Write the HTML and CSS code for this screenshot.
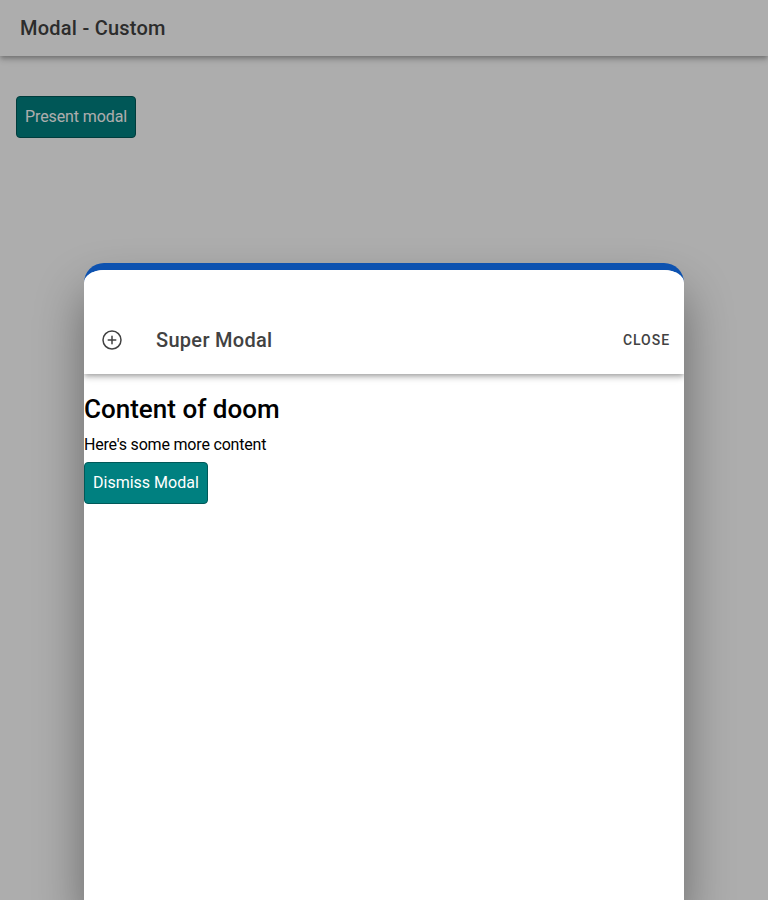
FILE: index.html
```html
<!DOCTYPE html>
<html lang="en">
<head>
<meta charset="utf-8">
<title>Modal - Custom</title>
<link rel="stylesheet" href="styles.css">
</head>
<body>
<header class="toolbar page-toolbar"><h1 class="title">Modal - Custom</h1></header>
<main class="page-content"><button class="btn btn-present">Present modal</button></main>
<div class="backdrop"></div>
<section class="modal" role="dialog">
  <header class="toolbar modal-toolbar">
    <svg class="icon" viewBox="0 0 512 512" fill="none" stroke="currentColor" stroke-width="32">
      <path d="M448 256c0-106-86-192-192-192S64 150 64 256s86 192 192 192 192-86 192-192z" stroke-miterlimit="10"/>
      <path d="M256 176v160M336 256H176" stroke-linecap="round" stroke-linejoin="round"/>
    </svg>
    <h2 class="title">Super Modal</h2>
    <button class="close">Close</button>
  </header>
  <div class="modal-content">
    <h1 class="heading">Content of doom</h1>
    <div class="text">Here's some more content</div>
    <button class="btn">Dismiss Modal</button>
  </div>
</section>
</body>
</html>
```
FILE: styles.css
```css
* { box-sizing: border-box; }
body {
  margin: 0;
  height: 900px;
  overflow: hidden;
  background: #fff;
  color: #000;
  font-family: Roboto, sans-serif;
  font-size: 16px;
}
.toolbar {
  display: flex;
  align-items: center;
  height: 56px;
  color: #424242;
  background: #fff;
  box-shadow: 0 2px 4px -1px rgba(0,0,0,.2), 0 4px 5px 0 rgba(0,0,0,.14), 0 1px 10px 0 rgba(0,0,0,.12);
}
.page-toolbar { padding: 0 20px; }
.title {
  margin: 0;
  font-size: 20px;
  font-weight: 500;
  letter-spacing: .24px;
}
.modal-toolbar .title { letter-spacing: .3px; }
.page-content { padding: 40px 16px; }
.btn {
  display: block;
  height: 42px;
  padding: 0 8px;
  border: 1px solid #005959;
  border-radius: 4px;
  background: teal;
  color: #fff;
  font: 400 16px/20px Roboto, sans-serif;
  white-space: nowrap;
}
.btn-present { width: 120px; letter-spacing: -.1px; }
.backdrop {
  position: absolute;
  inset: 0;
  background: rgba(0,0,0,.32);
}
.modal {
  position: absolute;
  top: 263px;
  left: 84px;
  width: 600px;
  height: 637px;
  overflow: hidden;
  border-top: 7px solid #0d52b0;
  border-radius: 20px 20px 0 0;
  background: #fff;
  box-shadow: 0 28px 48px rgba(0,0,0,.4);
}
.modal-toolbar { height: 104px; padding: 36px 8px 0 16px; }
.icon { width: 24px; height: 24px; margin: 0 32px 1px 0; }
.close {
  margin-left: auto;
  padding: 0 6px;
  border: 0;
  background: none;
  color: #424242;
  font: 500 14px/20px Roboto, sans-serif;
  letter-spacing: .95px;
  text-transform: uppercase;
}
.heading {
  margin: 20px 0 10px;
  font-size: 26px;
  line-height: 31px;
  font-weight: 500;
}
.text { margin-bottom: 8px; line-height: 19px; letter-spacing: -.19px; }
```
